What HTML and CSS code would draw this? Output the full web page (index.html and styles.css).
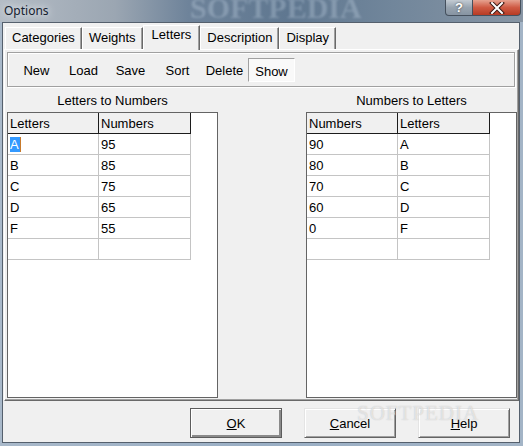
FILE: index.html
```html
<!DOCTYPE html>
<html lang="en">
<head>
    <meta charset="UTF-8">
    <title>Options</title>
    <link rel="stylesheet" href="styles.css">
</head>
<body>
    <div class="window">
        <div class="titlebar">
            <span class="title">Options</span>
            <span class="watermark">SOFTPEDIA</span>
            <div class="caption_buttons">
                <span class="cap cap_help">?</span>
                <span class="cap cap_close">
                    <svg width="16" height="12" viewBox="0 0 16 12">
                        <path d="M3 1 L13 11 M13 1 L3 11" stroke="#3b1a14" stroke-width="4" stroke-linecap="square"/>
                        <path d="M3 1 L13 11 M13 1 L3 11" stroke="#ffffff" stroke-width="2" stroke-linecap="square"/>
                    </svg>
                </span>
            </div>
        </div>
        <div class="frame">
            <div class="client">
                <div class="tabs">
                    <div class="tab">Categories</div>
                    <div class="tab">Weights</div>
                    <div class="tab selected">Letters</div>
                    <div class="tab">Description</div>
                    <div class="tab">Display</div>
                </div>
                <div class="panel">
                    <div class="toolbar">
                        <span class="tool">New</span>
                        <span class="tool">Load</span>
                        <span class="tool">Save</span>
                        <span class="tool">Sort</span>
                        <span class="tool">Delete</span>
                        <span class="tool checked">Show</span>
                    </div>
                    <div class="grids">
                        <div class="grid_col">
                            <div class="grid_caption">Letters to Numbers</div>
                            <div class="grid">
                                <table class="grid_table">
                                    <tr><th class="c1">Letters</th><th class="c2">Numbers</th></tr>
                                    <tr><td><span class="sel">A</span></td><td>95</td></tr>
                                    <tr><td>B</td><td>85</td></tr>
                                    <tr><td>C</td><td>75</td></tr>
                                    <tr><td>D</td><td>65</td></tr>
                                    <tr><td>F</td><td>55</td></tr>
                                    <tr><td></td><td></td></tr>
                                </table>
                            </div>
                        </div>
                        <div class="grid_col">
                            <div class="grid_caption">Numbers to Letters</div>
                            <div class="grid">
                                <table class="grid_table">
                                    <tr><th class="c1">Numbers</th><th class="c2">Letters</th></tr>
                                    <tr><td>90</td><td>A</td></tr>
                                    <tr><td>80</td><td>B</td></tr>
                                    <tr><td>70</td><td>C</td></tr>
                                    <tr><td>60</td><td>D</td></tr>
                                    <tr><td>0</td><td>F</td></tr>
                                    <tr><td></td><td></td></tr>
                                </table>
                            </div>
                        </div>
                    </div>
                </div>
                <div class="footer">
                    <button class="btn default"><u>O</u>K</button>
                    <button class="btn"><u>C</u>ancel</button>
                    <button class="btn"><u>H</u>elp</button>
                    <span class="mark_bottom">SOFTPEDIA</span>
                </div>
            </div>
        </div>
    </div>
</body>
</html>
```
FILE: styles.css
```css
* {
    box-sizing: border-box;
}
body {
    margin: 0;
    background-color: #9fb2c6;
    font-family: "Liberation Sans", Arial, sans-serif;
    font-size: 13px;
    color: #000;
}
.window {
    width: 523px;
    height: 446px;
    display: flex;
    flex-direction: column;
    background: linear-gradient(90deg, #a9b9ca, #9aafc5 50%, #a3b4c6);
}
.titlebar {
    position: relative;
    height: 22px;
    display: flex;
    align-items: flex-start;
    overflow: hidden;
    background: linear-gradient(90deg, #b4bcc5 0%, #9ba6b2 22%, #6e839a 36%, #5f7790 55%, #71869b 75%, #8795a4 100%);
}
.title {
    padding: 3px 0 0 4px;
    font-family: "Noto Sans", "Open Sans", sans-serif;
    font-size: 12px;
    line-height: 15px;
    color: #14202e;
    text-shadow: 0 0 6px #e6eaee, 0 0 10px #d8dde3;
}
.watermark {
    position: absolute;
    left: 190px;
    top: -7px;
    font-family: "Liberation Serif", serif;
    font-weight: bold;
    font-size: 30px;
    line-height: 30px;
    color: rgba(200, 214, 230, 0.32);
    filter: blur(1.2px);
}
.caption_buttons {
    margin-left: auto;
    margin-right: 2px;
    display: flex;
}
.cap {
    height: 16px;
    display: flex;
    align-items: center;
    justify-content: center;
    border: 1px solid #45505d;
    border-top: none;
}
.cap_help {
    width: 28px;
    border-radius: 0 0 0 4px;
    background: linear-gradient(#c3cbd3, #98a4b0 50%, #8794a2);
    color: #fff;
    font-weight: bold;
    font-size: 13px;
    text-shadow: 0 0 2px #333;
}
.cap_close {
    width: 48px;
    border-left: none;
    border-radius: 0 0 4px 0;
    background: linear-gradient(#e6a290, #cf5a43 50%, #b73b24);
}
.frame {
    flex: 1;
    display: flex;
    padding: 0 3px 3px 2px;
}
.client {
    flex: 1;
    display: flex;
    flex-direction: column;
    border: 1px solid #55606d;
    background-color: #f0f0f0;
}
.tabs {
    height: 26px;
    display: flex;
    align-items: flex-end;
    padding-left: 2px;
}
.tab {
    height: 22px;
    line-height: 20px;
    padding: 0 6px;
    border: 1px solid #fff;
    border-right-color: #696969;
    border-bottom: none;
    box-shadow: inset -1px 0 0 #a0a0a0;
    background-color: #f0f0f0;
}
.tab.selected {
    position: relative;
    z-index: 1;
    height: 25px;
    line-height: 18px;
    padding: 0 8px;
    margin-bottom: -1px;
}
.panel {
    height: 352px;
    margin-left: 1px;
    display: flex;
    flex-direction: column;
    padding: 0 0 2px 0;
    border: 1px solid #fff;
    border-right-color: #696969;
    border-bottom-color: #696969;
    box-shadow: inset -1px -1px 0 #a0a0a0;
}
.toolbar {
    height: 35px;
    margin: 2px 3px 0 2px;
    display: flex;
    padding: 5px 0 4px 5px;
    border: 1px solid #a0a0a0;
    box-shadow: inset 1px 1px 0 #fff, 1px 1px 0 #fff;
}
.tool {
    width: 47px;
    height: 24px;
    display: flex;
    align-items: center;
    justify-content: center;
}
.tool.checked {
    border: 1px solid;
    border-color: #a0a0a0 #fff #fff #a0a0a0;
    background-color: #f9f9f9;
    padding-top: 3px;
}
.grids {
    display: flex;
    justify-content: space-between;
    margin: 6px 1px 0 2px;
}
.grid_col {
    width: 211px;
}
.grid_caption {
    height: 15px;
    line-height: 15px;
    text-align: center;
    margin-bottom: 4px;
}
.grid {
    height: 286px;
    border: 1px solid #646464;
    background-color: #fff;
}
.grid_table {
    border-collapse: separate;
    border-spacing: 0;
    table-layout: fixed;
    width: 183px;
}
.grid_table th, .grid_table td {
    height: 21px;
    padding: 3px 2px 1px 2px;
    line-height: 16px;
    text-align: left;
    font-weight: normal;
    white-space: nowrap;
    vertical-align: top;
}
.grid_table th {
    background-color: #f0f0f0;
    border-right: 1px solid #1c1c1c;
    border-bottom: 1px solid #1c1c1c;
}
.grid_table td {
    border-right: 1px solid #c4c4c4;
    border-bottom: 1px solid #c4c4c4;
}
.c1 {
    width: 91px;
}
.c2 {
    width: 92px;
}
.sel {
    background-color: #3399ff;
    color: #fff;
    padding-right: 1px;
    border-right: 1px solid #c77a2c;
}
.footer {
    position: relative;
    flex: 1;
    display: flex;
    justify-content: flex-end;
    align-items: flex-start;
    gap: 22px;
    padding: 7px 9px 0 0;
}
.btn {
    width: 92px;
    height: 30px;
    padding: 0;
    font-family: "Liberation Sans", Arial, sans-serif;
    font-size: 13px;
    color: #000;
    background-color: #f0f0f0;
    border: 1px solid;
    border-color: #e4e4e4 #646464 #646464 #e4e4e4;
    box-shadow: inset 1px 1px 0 #fff, inset -1px -1px 0 #a0a0a0;
}
.btn.default {
    border-color: #5c5c5c;
    box-shadow: inset 1px 1px 0 #fff, inset -2px -2px 0 #8a8a8a;
}
.mark_bottom {
    position: absolute;
    left: 354px;
    top: 0;
    font-family: "Liberation Serif", serif;
    font-size: 21px;
    letter-spacing: 1px;
    color: rgba(255, 255, 255, 0.55);
    text-shadow: 0 0 1px rgba(140, 140, 140, 0.5);
    pointer-events: none;
}
```
